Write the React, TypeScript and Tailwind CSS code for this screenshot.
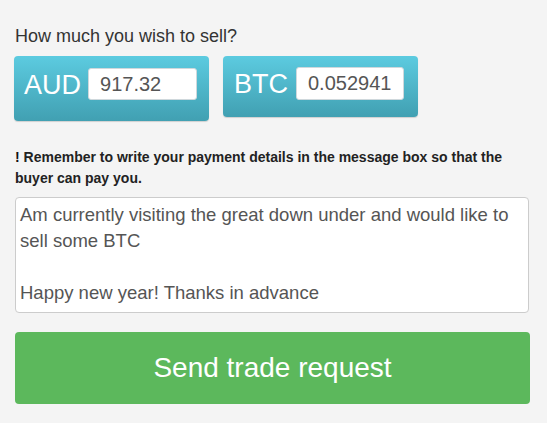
import React, { useState } from 'react';

const App: React.FC = () => {
  const [aud, setAud] = useState('917.32');
  const [btc, setBtc] = useState('0.052941');
  const [message, setMessage] = useState(
    'Am currently visiting the great down under and would like to sell some BTC\n\nHappy new year! Thanks in advance'
  );

  return (
    <div className="min-h-[423px] w-full bg-[#f4f4f4] font-['Liberation_Sans',Arial,sans-serif] pl-[14px] pr-[17px] pt-[26px]">
      <p className="text-[18px] leading-[20px] text-[#333] pl-px">How much you wish to sell?</p>

      <div className="flex items-start gap-[14px] mt-[10px]">
        {/* currency boxes */}
        <div className="w-[195px] h-[65px] rounded-[4px] bg-gradient-to-b from-[#5ccbe0] to-[#41a0b2] flex items-start pt-[12px] pl-[10px] shadow-[0_1px_1px_rgba(0,0,0,0.15)]">
          <span className="text-[27px] leading-[34px] text-white">AUD</span>
          <input
            value={aud}
            onChange={(e) => setAud(e.target.value)}
            className="ml-[7px] w-[109px] h-[32px] rounded-[3px] bg-white border border-[#cfd8dc] px-[11px] text-[20px] text-[#555] outline-none"
          />
        </div>

        <div className="w-[195px] h-[61px] rounded-[4px] bg-gradient-to-b from-[#5ccbe0] to-[#41a0b2] flex items-start pt-[11px] pl-[11px] shadow-[0_1px_1px_rgba(0,0,0,0.15)]">
          <span className="text-[27px] leading-[35px] text-white">BTC</span>
          <input
            value={btc}
            onChange={(e) => setBtc(e.target.value)}
            className="ml-[8px] w-[108px] h-[33px] rounded-[3px] bg-white border border-[#cfd8dc] px-[11px] text-[20px] text-[#555] outline-none"
          />
        </div>
      </div>

      <p className="mt-[26px] text-[14px] leading-[21px] font-bold text-[#222] pl-px pr-[20px]">
        <span className="text-[#111]">!</span> Remember to write your payment details in the message box so that the buyer can pay you.
      </p>

      <textarea
        value={message}
        onChange={(e) => setMessage(e.target.value)}
        className="mt-[8px] ml-px block w-[514px] h-[116px] resize-none rounded-[4px] border border-[#cccccc] bg-white px-[4px] py-[4px] text-[18.5px] leading-[26px] text-[#555] outline-none"
      />

      <button className="mt-[19px] ml-px w-[515px] h-[72px] rounded-[4px] bg-[#5cb85c] text-white text-[28px] leading-none">
        Send trade request
      </button>
    </div>
  );
};

export default App;
